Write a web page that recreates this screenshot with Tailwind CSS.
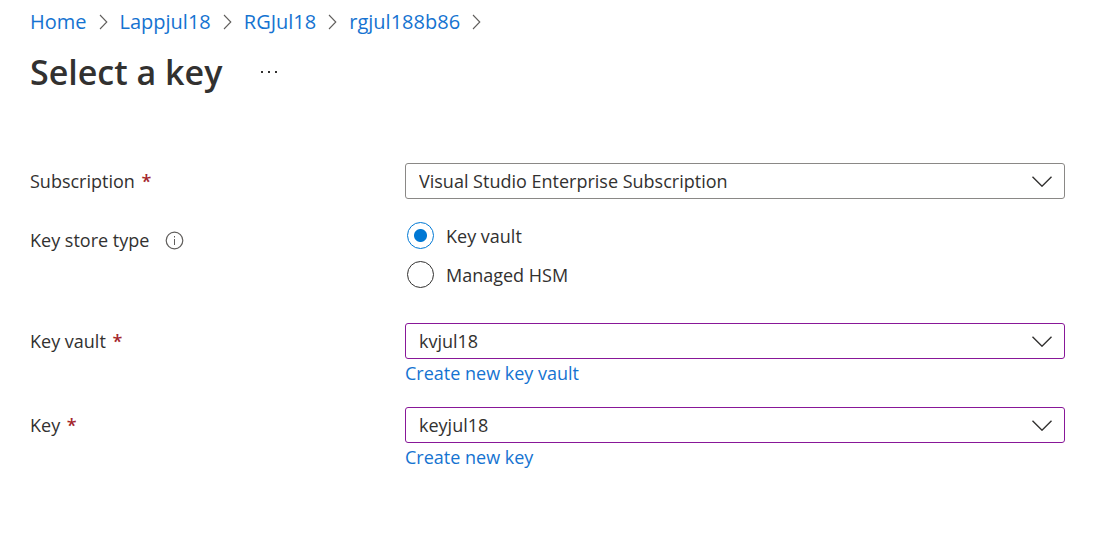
<!DOCTYPE html>
<html lang="en">
<head>
<meta charset="utf-8">
<meta name="viewport" content="width=device-width, initial-scale=1">
<title>Select a key</title>
<script src="https://cdn.jsdelivr.net/npm/@tailwindcss/browser@4"></script>
</head>
<body class="bg-white font-['Segoe_UI','Open_Sans',sans-serif] text-[18px] leading-6 text-[#323130]">
<svg class="hidden">
  <symbol id="crumb" viewBox="0 0 8 16"><path d="M0.5 1 7.3 8 0.5 15" fill="none" stroke="#605e5c" stroke-width="1.1"/></symbol>
  <symbol id="down" viewBox="0 0 20 11"><path d="M0.5 0.7 10 10.2 19.500 0.7" fill="none" stroke="#323130" stroke-width="1.4"/></symbol>
</svg>
<div class="pt-[10px] pr-12 pb-12 pl-[30px]">
  <nav aria-label="Breadcrumb">
    <ol class="flex items-center gap-3 text-[20px] leading-6 text-[#1573d1]">
      <li><a href="#">Home</a></li>
      <li aria-hidden="true"><svg class="h-4 w-[9px]"><use href="#crumb"/></svg></li>
      <li><a href="#">Lappjul18</a></li>
      <li aria-hidden="true"><svg class="h-4 w-[9px]"><use href="#crumb"/></svg></li>
      <li><a href="#">RGJul18</a></li>
      <li aria-hidden="true"><svg class="h-4 w-[9px]"><use href="#crumb"/></svg></li>
      <li><a href="#">rgjul188b86</a></li>
      <li aria-hidden="true"><svg class="h-4 w-[9px]"><use href="#crumb"/></svg></li>
    </ol>
  </nav>
  <header class="mt-[14px] flex h-12 items-center gap-[38px]">
    <h1 class="text-[34px] leading-[48px] font-semibold">Select a key</h1>
    <button type="button" aria-label="More options" class="flex h-6 items-center">
      <svg class="h-[2px] w-[18px]" viewBox="0 0 18 2" fill="#323130"><path d="M1 0h2v2h-2zM8 0h2v2h-2zM15 0h2v2h-2z"/></svg>
    </button>
  </header>
  <form class="mt-[67px] grid grid-cols-[375px_1fr]">
    <label for="subscription" class="mt-[6px]">Subscription <span class="ml-[2px] font-semibold text-[#a4262c]">*</span></label>
    <div class="relative">
      <select id="subscription" class="block h-9 w-full appearance-none rounded-[3px] border border-[#8a8886] bg-white px-[13px]"><option>Visual Studio Enterprise Subscription</option></select>
      <svg class="pointer-events-none absolute top-[13px] right-[13px] h-[11px] w-5"><use href="#down"/></svg>
    </div>

    <div id="store-type" class="mt-[29px] flex h-6 items-center gap-4">Key store type
      <svg class="size-[19px]" viewBox="0 0 19 19" fill="none" stroke="#605e5c"><circle cx="9.500" cy="9.500" r="8.300" stroke-width="1.200"/><path d="M9.500 8v6M9.500 5v1.500" stroke-width="1"/></svg>
    </div>
    <div role="radiogroup" aria-labelledby="store-type" class="mt-[23px] flex flex-col gap-3 pl-[2px]">
      <label class="flex items-center gap-3"><input type="radio" name="store" checked class="size-[27px] appearance-none rounded-full border border-[#323130] checked:border-[#0078d4] checked:bg-[radial-gradient(circle,#0078d4_6px,transparent_7px)]">Key vault</label>
      <label class="flex items-center gap-3"><input type="radio" name="store" class="size-[27px] appearance-none rounded-full border border-[#323130] checked:border-[#0078d4] checked:bg-[radial-gradient(circle,#0078d4_6px,transparent_7px)]">Managed HSM</label>
    </div>

    <label for="vault" class="mt-[41px]">Key vault <span class="ml-[2px] font-semibold text-[#a4262c]">*</span></label>
    <div class="relative mt-[35px]">
      <select id="vault" class="block h-9 w-full appearance-none rounded-[3px] border border-[#881798] bg-white px-[13px]"><option>kvjul18</option></select>
      <svg class="pointer-events-none absolute top-[13px] right-[13px] h-[11px] w-5"><use href="#down"/></svg>
      <a href="#" class="mt-[2px] block w-fit text-[#1573d1]">Create new key vault</a>
    </div>

    <label for="key" class="mt-7">Key <span class="ml-[2px] font-semibold text-[#a4262c]">*</span></label>
    <div class="relative mt-[22px]">
      <select id="key" class="block h-9 w-full appearance-none rounded-[3px] border border-[#881798] bg-white px-[13px]"><option>keyjul18</option></select>
      <svg class="pointer-events-none absolute top-[13px] right-[13px] h-[11px] w-5"><use href="#down"/></svg>
      <a href="#" class="mt-[2px] block w-fit text-[#1573d1]">Create new key</a>
    </div>
  </form>
</div>
</body>
</html>
